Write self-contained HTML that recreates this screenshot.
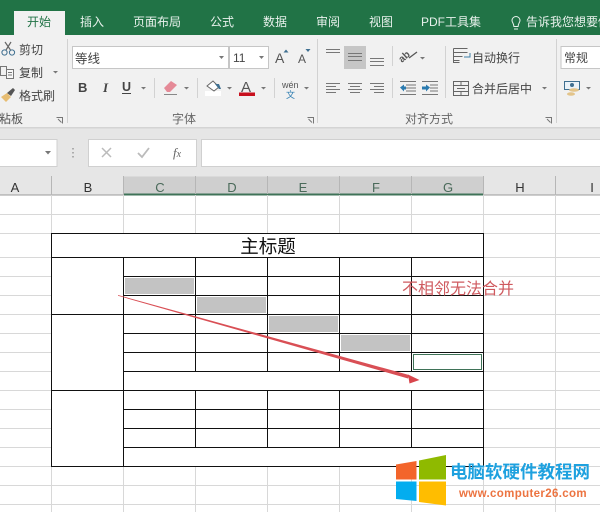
<!DOCTYPE html>
<html><head><meta charset="utf-8">
<style>
html,body{margin:0;padding:0;background:#fff;width:600px;height:512px;overflow:hidden}
svg{display:block;position:absolute;left:0;top:0;filter:blur(.25px)}
text{font-family:"Liberation Sans","Noto Sans CJK SC",sans-serif;fill:#444}
.tab{font-size:12px;fill:#e8f1ec;text-anchor:middle}
.r{font-size:12px;fill:#444}
.g{font-size:12px;fill:#666;text-anchor:middle}
.h{font-size:13px;fill:#333;text-anchor:middle}
.hs{font-size:13px;fill:#4a6a5a;text-anchor:middle}
</style></head><body>
<svg width="600" height="512" viewBox="0 0 600 512" xmlns="http://www.w3.org/2000/svg">
<!-- title band -->
<rect width="600" height="35" fill="#217346"/>
<rect x="14" y="11" width="51" height="25" fill="#f1f1f1"/>
<text x="39" y="26" class="tab" style="fill:#217346">开始</text>
<text x="92" y="26" class="tab">插入</text>
<text x="157" y="26" class="tab">页面布局</text>
<text x="222" y="26" class="tab">公式</text>
<text x="275" y="26" class="tab">数据</text>
<text x="328" y="26" class="tab">审阅</text>
<text x="381" y="26" class="tab">视图</text>
<text x="451" y="26" class="tab">PDF工具集</text>
<path d="M514 29h4M512 20.500a4 4 0 1 1 8 0c0 2-1.700 2.500-1.900 6h-4.200c-.2-3.500-1.900-4-1.900-6z" fill="none" stroke="#e8f1ec" stroke-width="1"/>
<text x="526" y="26" class="tab" style="text-anchor:start;font-size:12px">告诉我您想要做</text>

<!-- ribbon -->
<rect y="35" width="600" height="93" fill="#f1f1f1"/>
<rect y="127" width="600" height="1.500" fill="#d4d4d4"/>
<g stroke="#d2d2d2" stroke-width="1">
<path d="M67.500 39v84M317.500 39v84M556.500 39v84"/>
<path d="M154.500 78v20M197.500 78v20M274.500 78v20M392.500 46v20M392.500 78v20M445.500 46v52"/>
</g>

<!-- clipboard -->
<g fill="none" stroke-width="1">
<circle cx="4.500" cy="52.500" r="2.600" stroke="#3f6f90"/><circle cx="12" cy="52.500" r="2.600" stroke="#3f6f90"/>
<path d="M6 50L11 42M10.500 50L5 42" stroke="#666" stroke-width="1.200"/>
<path d="M0.500 66.500h6v9h-6z" stroke="#777"/>
<path d="M6.500 69.500h7v9h-7z" fill="#f8f8f8" stroke="#777"/>
<path d="M8 72.500h4M8 75h4" stroke="#777"/>
</g>
<text x="19" y="54" class="r">剪切</text>
<text x="19" y="77" class="r">复制</text>
<path d="M53 71l2.500 2.500 2.500-2.500z" fill="#777"/>
<path d="M1 97l6-4 4 4-5 5z" fill="#e7bd72"/><path d="M7 93l6-5 2 2-4 6z" fill="#555"/>
<text x="19" y="100" class="r">格式刷</text>
<text x="-1" y="123" class="r" style="fill:#555">粘板</text>
<path d="M56.500 117.500h6v6M58 119l3.500 3.500" fill="none" stroke="#777"/>

<!-- font -->
<rect x="72.500" y="46.500" width="156" height="22" fill="#fff" stroke="#c6c6c6"/>
<rect x="229.500" y="46.500" width="39" height="22" fill="#fff" stroke="#c6c6c6"/>
<text x="75" y="63" style="font-size:12.500px;fill:#444">等线</text>
<path d="M219 56l2.500 3 2.500-3z" fill="#777"/>
<text x="233" y="62" class="r">11</text>
<path d="M259 56l2.500 3 2.500-3z" fill="#777"/>
<text x="275" y="63" style="font-size:14px;fill:#555">A</text>
<path d="M286 49.500l2.500 3h-5z" fill="#3f6f90"/>
<text x="298" y="63" style="font-size:12px;fill:#555">A</text>
<path d="M305.500 49h5l-2.500 3z" fill="#3f6f90"/>
<text x="78" y="92" style="font-size:13px;font-weight:bold;fill:#444">B</text>
<text x="103" y="92" style="font-size:13px;font-style:italic;font-family:'Liberation Serif',serif;fill:#444;font-weight:bold">I</text>
<text x="122" y="91" style="font-size:12.500px;font-weight:bold;fill:#444">U</text>
<path d="M122 93.500h9" stroke="#444"/>
<path d="M141 87l2.500 2.500 2.500-2.500z" fill="#777"/>
<path d="M164 88l7-7 6 4-7 7h-3z" fill="#e58a97"/><path d="M164 94.500h13" stroke="#888"/>
<path d="M184 87l2.500 2.500 2.500-2.500z" fill="#777"/>
<rect x="205" y="91" width="16" height="5" fill="#fff"/>
<path d="M207 86l6-5 6 6-5 4z" fill="#fff" stroke="#666"/><path d="M215 84h4l2 5h-2z" fill="#3f6f90"/>
<path d="M227 87l2.500 2.500 2.500-2.500z" fill="#777"/>
<text x="241" y="92" style="font-size:15px;fill:#555">A</text>
<rect x="239" y="92.500" width="16" height="3.500" fill="#c8101e"/>
<path d="M261 87l2.500 2.500 2.500-2.500z" fill="#777"/>
<text x="282" y="88" style="font-size:9px;fill:#555">wén</text>
<text x="286" y="98" style="font-size:9px;fill:#2b7bb0">文</text>
<path d="M304 87l2.500 2.500 2.500-2.500z" fill="#777"/>
<text x="184" y="123" class="g">字体</text>
<path d="M307.500 117.500h6v6M308.500 119l3.500 3.500" fill="none" stroke="#777"/>

<!-- alignment -->
<rect x="344" y="46" width="22" height="23" fill="#c6c6c6"/>
<g stroke="#777" stroke-width="1" fill="none">
<path d="M326 49.500h14M326 52.500h14"/>
<path d="M348 53.500h14M348 56.500h14M348 60.500h14"/>
<path d="M370 58.500h14M370 61.500h14M370 65.500h14"/>
<path d="M326 83.500h14M326 86.500h10M326 89.500h14M326 92.500h10"/>
<path d="M348 83.500h14M350 86.500h10M348 89.500h14M350 92.500h10"/>
<path d="M370 83.500h14M374 86.500h10M370 89.500h14M374 92.500h10"/>
<path d="M400 81.500h16M406 85h10M406 88h10M406 91h10M400 94.500h16"/>
<path d="M422 81.500h16M430 85h8M430 88h8M430 91h8M422 94.500h16"/>
<path d="M409 58l8-6" stroke="#555" stroke-width="1.300"/>
</g>
<text x="402" y="63" transform="rotate(-42 402 63)" style="font-size:10px;font-weight:bold;fill:#555">ab</text>
<path d="M420 57l2.500 2.500 2.500-2.500z" fill="#777"/>
<path d="M400 87.500l4-3v2h2v3h-2v2z" fill="#2b7bb0"/>
<path d="M430 87.500l-4-3v2h-4v3h4v2z" fill="#2b7bb0"/>
<g fill="none" stroke="#666">
<path d="M453.500 48.500h14M453.500 52.500h14M453.500 56.500h9M453.500 60.500h6M453.500 48.500v14h6"/>
<path d="M470 53v4h-6" stroke="#3f7fa8"/>
<rect x="453.500" y="81.500" width="15" height="14"/>
<path d="M453.500 85.500h15M453.500 91.500h15M457 88.500h8M461 85.500v-4M461 91.500v4"/>
</g>
<text x="472" y="62" class="r">自动换行</text>
<text x="472" y="93" class="r">合并后居中</text>
<path d="M542 87l2.500 2.500 2.500-2.500z" fill="#777"/>
<text x="429" y="123" class="g">对齐方式</text>
<path d="M545.500 117.500h6v6M547 119l3.500 3.500" fill="none" stroke="#777"/>

<!-- number -->
<rect x="561" y="46.500" width="40" height="22" fill="#fff" stroke="#c6c6c6"/>
<text x="564" y="62" class="r">常规</text>
<rect x="564.500" y="81.500" width="15" height="8" fill="#eaf2f8" stroke="#3f6f90"/>
<circle cx="572" cy="85" r="2" fill="#3f6f90"/>
<ellipse cx="574" cy="90" rx="5" ry="1.800" fill="#e3c48a"/><ellipse cx="571" cy="94" rx="4" ry="1.800" fill="#e3c48a"/>
<path d="M586 87l2.500 2.500 2.500-2.500z" fill="#777"/>

<!-- formula bar -->
<rect y="128.500" width="600" height="48" fill="#e6e6e6"/>
<rect x="-1" y="139.500" width="58" height="27" fill="#fff" stroke="#d0d0d0"/>
<path d="M45 151l3 3.500 3-3.500z" fill="#777"/>
<path d="M73 148v1.500M73 152v1.500M73 156v1.500" stroke="#999" stroke-width="1.500"/>
<rect x="88.500" y="139.500" width="108" height="27" fill="#fff" stroke="#d0d0d0"/>
<path d="M102 148l9 9M111 148l-9 9" stroke="#bbb" stroke-width="1.500"/>
<path d="M138 153l4 4 7-9" stroke="#bbb" stroke-width="1.800" fill="none"/>
<text x="173" y="157" style="font-family:'Liberation Serif',serif;font-style:italic;font-size:13px;fill:#666">f<tspan style="font-size:10px">x</tspan></text>
<rect x="201.500" y="139.500" width="400" height="27" fill="#fff" stroke="#d0d0d0"/>

<!-- column headers -->
<rect y="176.500" width="600" height="19" fill="#e6e6e6"/>
<rect x="123.500" y="176.500" width="360" height="18" fill="#cfcfcf"/>
<rect x="0" y="194.500" width="600" height="1" fill="#9b9b9b"/>
<rect x="123.500" y="193.500" width="360" height="2" fill="#3f7358"/>
<g stroke="#b6b6b6"><path d="M51.500 176v19M123.500 176v19M195.500 176v18M267.500 176v18M339.500 176v18M411.500 176v18M483.500 176v19M555.500 176v19"/></g>
<text x="15" y="192" class="h">A</text>
<text x="88" y="192" class="h">B</text>
<text x="160" y="192" class="hs">C</text>
<text x="232" y="192" class="hs">D</text>
<text x="303" y="192" class="hs">E</text>
<text x="376" y="192" class="hs">F</text>
<text x="448" y="192" class="hs">G</text>
<text x="520" y="192" class="h">H</text>
<text x="592" y="192" class="h">I</text>

<!-- grid -->
<g stroke="#d8d8d8" stroke-width="1">
<path d="M0 214.500h600M0 233.500h600M0 257.500h600M0 276.500h600M0 295.500h600M0 314.500h600M0 333.500h600M0 352.500h600M0 371.500h600M0 390.500h600M0 409.500h600M0 428.500h600M0 447.500h600M0 466.500h600M0 485.500h600M0 504.500h600"/>
<path d="M51.500 195v317M123.500 195v317M195.500 195v317M267.500 195v317M339.500 195v317M411.500 195v317M483.500 195v317M555.500 195v317"/>
</g>

<!-- table -->
<rect x="51.500" y="233.500" width="432" height="233" fill="#fff"/>
<rect x="125" y="278" width="69" height="16" fill="#c3c3c3"/>
<rect x="197" y="297" width="69" height="16" fill="#c3c3c3"/>
<rect x="269" y="316" width="69" height="16" fill="#c3c3c3"/>
<rect x="341" y="335" width="69" height="16" fill="#c3c3c3"/>
<g stroke="#111" stroke-width="1" fill="none">
<rect x="51.500" y="233.500" width="432" height="233"/>
<path d="M51.500 257.500h432M123.500 276.500h360M123.500 295.500h360M51.500 314.500h432M123.500 333.500h360M123.500 352.500h360M123.500 371.500h360M51.500 390.500h432M123.500 409.500h360M123.500 428.500h360M123.500 447.500h360"/>
<path d="M123.500 257.500v209M195.500 257.500v114M267.500 257.500v114M339.500 257.500v114M411.500 257.500v114M195.500 390.500v57M267.500 390.500v57M339.500 390.500v57M411.500 390.500v57"/>
</g>
<rect x="413.500" y="354.500" width="68" height="15" fill="#fff" stroke="#3f7358" stroke-width="1"/>
<text x="268" y="253" style="font-size:18.500px;fill:#111;text-anchor:middle">主标题</text>
<text x="402" y="294" style="font-size:16px;fill:#cf5a5f">不相邻无法合并</text>

<!-- arrow -->
<path d="M118 295L118 295.800L408 378.500L409 375z" fill="#d94f55"/>
<path d="M408 374.500L419.500 380L409.500 383.500z" fill="#d8454c"/>

<!-- watermark -->
<path d="M396 464.500l20.500-3.500v18.500H396z" fill="#f3652b"/>
<path d="M419 460.500l27-5.500v24.500h-27z" fill="#8fba00"/>
<path d="M396 481.500h20.500v19.500L396 499z" fill="#03adef"/>
<path d="M419 481.500h27v24l-27-3.500z" fill="#ffbd00"/>
<text x="450" y="478" style="font-size:17.500px;font-weight:bold;fill:#1ea1df">电脑软硬件教程网</text>
<text x="459" y="497" style="font-size:11.500px;font-weight:bold;fill:#ec7340;letter-spacing:.35px">www.computer26.com</text>
</svg>
</body></html>
